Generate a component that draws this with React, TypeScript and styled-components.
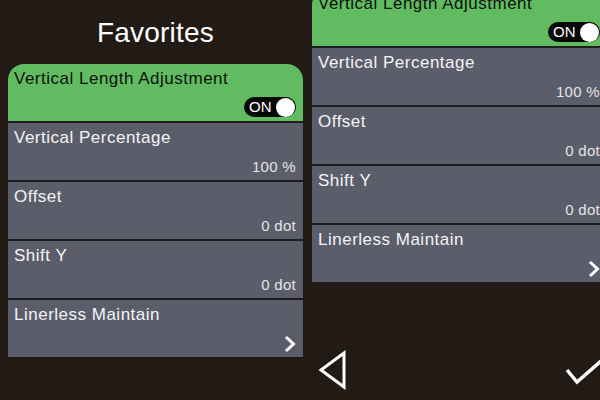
import styled, { createGlobalStyle } from "styled-components";

interface Item {
  title: string;
  value?: string;
  kind: "toggle" | "value" | "link";
}

const items: Item[] = [
  { title: "Vertical Length Adjustment", kind: "toggle" },
  { title: "Vertical Percentage", value: "100 %", kind: "value" },
  { title: "Offset", value: "0 dot", kind: "value" },
  { title: "Shift Y", value: "0 dot", kind: "value" },
  { title: "Linerless Maintain", kind: "link" },
];

function List({ $shift }: { $shift?: boolean }) {
  return (
    <St.List $shift={$shift}>
      {items.map((it) => (
        <St.Row key={it.title} $active={it.kind === "toggle"}>
          <St.Title $active={it.kind === "toggle"}>{it.title}</St.Title>
          <St.Bottom>
            {it.kind === "value" && <St.Value>{it.value}</St.Value>}
            {it.kind === "toggle" && (
              <St.Toggle>
                <St.ToggleText>ON</St.ToggleText>
                <St.Knob />
              </St.Toggle>
            )}
            {it.kind === "link" && (
              <svg width="12" height="18" viewBox="0 0 12 18">
                <polyline
                  points="2,2 9.5,9 2,16"
                  fill="none"
                  stroke="#fff"
                  strokeWidth="3"
                />
              </svg>
            )}
          </St.Bottom>
        </St.Row>
      ))}
    </St.List>
  );
}

export default function App() {
  return (
    <>
      <GlobalStyle />
      <St.Page>
        <St.LeftScreen>
          <St.Header>Favorites</St.Header>
          <List />
        </St.LeftScreen>
        <St.RightScreen>
          <List $shift />
          <St.Footer>
            <svg width="30" height="40" viewBox="0 0 30 40">
              <polygon
                points="26,3 26,37 3,20"
                fill="none"
                stroke="#fff"
                strokeWidth="3"
                strokeLinejoin="miter"
              />
            </svg>
            <svg width="40" height="26" viewBox="0 0 40 26">
              <polyline
                points="2,10 12,22 36,1"
                fill="none"
                stroke="#fff"
                strokeWidth="3.5"
              />
            </svg>
          </St.Footer>
        </St.RightScreen>
      </St.Page>
    </>
  );
}

const GlobalStyle = createGlobalStyle`
  html, body {
    margin: 0;
    background: #221a14;
    overflow: hidden;
  }
  body {
    font-family: "Liberation Sans", Arial, sans-serif;
  }
`;

const St = {
  Page: styled.div`
    display: flex;
    width: 600px;
    height: 400px;
    overflow: hidden;
    background: #221a14;
  `,
  LeftScreen: styled.div`
    flex: 0 0 295px;
    padding: 0 1px 0 8px;
    display: flex;
    flex-direction: column;
  `,
  RightScreen: styled.div`
    flex: 0 0 295px;
    padding-left: 8px;
    display: flex;
    flex-direction: column;
  `,
  Header: styled.div`
    height: 64px;
    padding-top: 2px;
    box-sizing: border-box;
    display: flex;
    align-items: center;
    justify-content: center;
    color: #fff;
    font-size: 28px;
    letter-spacing: 0.2px;
  `,
  List: styled.div<{ $shift?: boolean }>`
    display: flex;
    flex-direction: column;
    gap: 2px;
    background: #1d1d22;
    margin-top: ${(p) => (p.$shift ? "-11px" : "0")};
    border-radius: 16px 16px 0 0;
    overflow: hidden;
  `,
  Row: styled.div<{ $active?: boolean }>`
    height: 57px;
    box-sizing: border-box;
    padding: 5px 7px 4px 6px;
    display: flex;
    flex-direction: column;
    background: ${(p) => (p.$active ? "#61bc61" : "#5b5d6a")};
  `,
  Title: styled.div<{ $active?: boolean }>`
    font-size: 17px;
    line-height: 20px;
    letter-spacing: 0.5px;
    color: ${(p) => (p.$active ? "#0b120b" : "#f4f4f6")};
    white-space: nowrap;
  `,
  Bottom: styled.div`
    margin-top: auto;
    display: flex;
    justify-content: flex-end;
    align-items: flex-end;
  `,
  Value: styled.div`
    font-size: 15px;
    line-height: 18px;
    color: #e4e4e8;
    letter-spacing: 0.3px;
    white-space: nowrap;
  `,
  Toggle: styled.div`
    width: 52px;
    height: 20px;
    box-sizing: border-box;
    border-radius: 10px;
    background: #060806;
    display: flex;
    align-items: center;
    justify-content: space-between;
    padding: 0 1px 0 5px;
  `,
  ToggleText: styled.span`
    color: #fff;
    font-size: 15px;
    line-height: 16px;
  `,
  Knob: styled.span`
    width: 19px;
    height: 19px;
    border-radius: 50%;
    background: #fff;
  `,
  Footer: styled.div`
    margin-top: auto;
    height: 50px;
    display: flex;
    justify-content: space-between;
    align-items: flex-start;
    padding: 0 2px 0 6px;
    svg:last-child {
      margin-top: 10px;
    }
  `,
};
